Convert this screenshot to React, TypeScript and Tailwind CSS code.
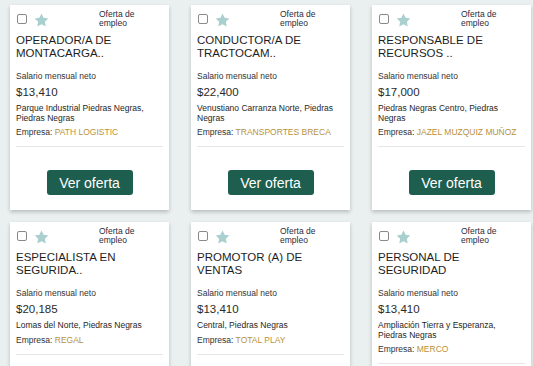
import { useState } from 'react';

type Job = {
  id: number;
  title: string;
  salary: string;
  location: string;
  company: string;
};

const jobs: Job[] = [
  {
    id: 1,
    title: 'OPERADOR/A DE MONTACARGA..',
    salary: '$13,410',
    location: 'Parque Industrial Piedras Negras, Piedras Negras',
    company: 'PATH LOGISTIC',
  },
  {
    id: 2,
    title: 'CONDUCTOR/A DE TRACTOCAM..',
    salary: '$22,400',
    location: 'Venustiano Carranza Norte, Piedras Negras',
    company: 'TRANSPORTES BRECA',
  },
  {
    id: 3,
    title: 'RESPONSABLE DE RECURSOS ..',
    salary: '$17,000',
    location: 'Piedras Negras Centro, Piedras Negras',
    company: 'JAZEL MUZQUIZ MUÑOZ',
  },
  {
    id: 4,
    title: 'ESPECIALISTA EN SEGURIDA..',
    salary: '$20,185',
    location: 'Lomas del Norte, Piedras Negras',
    company: 'REGAL',
  },
  {
    id: 5,
    title: 'PROMOTOR (A) DE VENTAS',
    salary: '$13,410',
    location: 'Central, Piedras Negras',
    company: 'TOTAL PLAY',
  },
  {
    id: 6,
    title: 'PERSONAL DE SEGURIDAD',
    salary: '$13,410',
    location: 'Ampliación Tierra y Esperanza, Piedras Negras',
    company: 'MERCO',
  },
];

function Star() {
  return (
    <svg width="15" height="14" viewBox="0 0 24 23" className="fill-[#a9cfcf]">
      <path d="M12 0.8l3.4 7.1 7.8 1-5.7 5.4 1.4 7.7L12 18.3 5.1 22l1.4-7.7L0.8 8.9l7.8-1z" />
    </svg>
  );
}

function JobCard({ job }: { job: Job }) {
  const [checked, setChecked] = useState(false);

  return (
    <div className="bg-white shadow-[0_2px_4px_rgba(0,0,0,0.22)] px-[6px] pt-[5px] pb-[15px] flex flex-col">
      {/* Header */}
      <div className="flex items-center h-[18px]">
        <button
          type="button"
          onClick={() => setChecked(!checked)}
          className="w-[10px] h-[10px] border border-[#8a8a8a] rounded-[2px] bg-white ml-[1px]"
          aria-pressed={checked}
        />
        <span className="ml-[7px] mt-[1px]">
          <Star />
        </span>
        <p className="ml-auto w-[64px] text-[8.5px] leading-[9px] text-[#2b2b3a]">Oferta de empleo</p>
      </div>

      {/* Title */}
      <h3 className="mt-[6px] text-[11.5px] leading-[13px] text-[#1e1e1e] min-h-[26px]">{job.title}</h3>

      <p className="mt-[11px] text-[8.5px] leading-[10px] text-[#333]">Salario mensual neto</p>
      <p className="mt-[5px] text-[11.5px] leading-[13px] text-[#2a2a2a]">{job.salary}</p>
      <p className="mt-[5px] text-[8.5px] leading-[9.5px] text-[#262626]">{job.location}</p>
      <p className="mt-[4px] text-[8.5px] leading-[10px] text-[#333]">
        Empresa: <span className="text-[#b8923a]">{job.company}</span>
      </p>

      <div className="mt-[9px] h-px bg-[#e6e6e6]" />

      <div className="mt-[23px] flex justify-center">
        <button
          type="button"
          className="w-[86px] h-[25px] rounded-[3px] bg-[#1e5e4e] text-white text-[14px] leading-none"
        >
          Ver oferta
        </button>
      </div>
    </div>
  );
}

export default function App() {
  return (
    <div className="min-h-screen bg-[#e9f0ef] pl-[10px] pt-[5px] font-['Liberation_Sans',Arial,sans-serif] overflow-hidden">
      <div className="grid grid-cols-[159px_159px_159px] gap-x-[22px] gap-y-[12px]">
        {jobs.map((job) => (
          <JobCard key={job.id} job={job} />
        ))}
      </div>
    </div>
  );
}
